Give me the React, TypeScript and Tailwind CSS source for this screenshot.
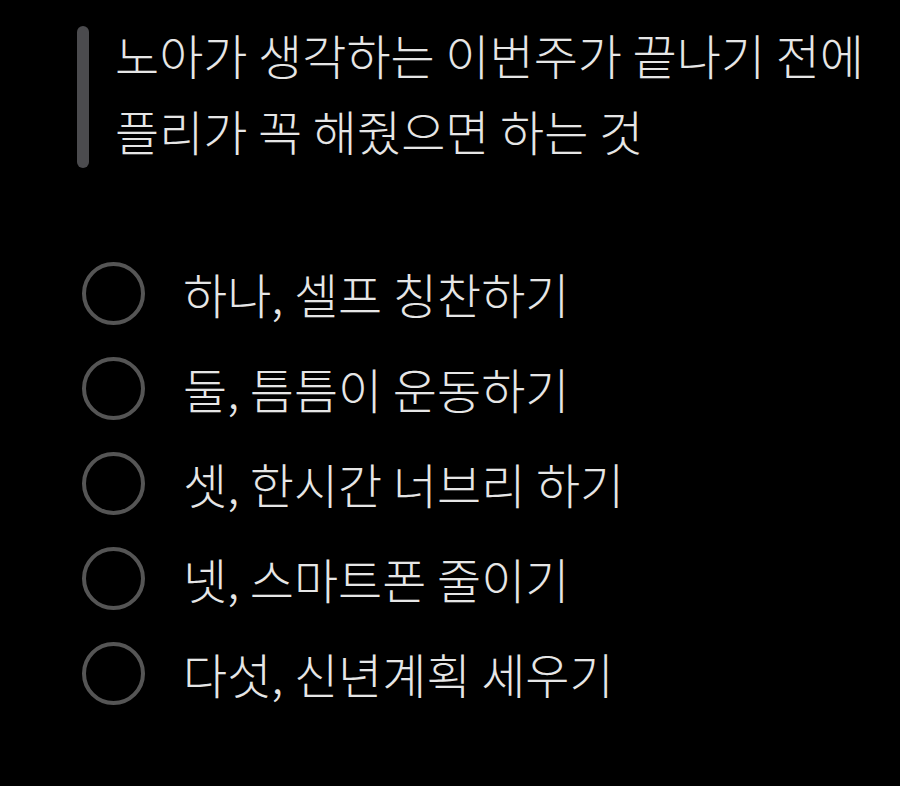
import React from "react";

const items = [
  "하나, 셀프 칭찬하기",
  "둘, 틈틈이 운동하기",
  "셋, 한시간 너브리 하기",
  "넷, 스마트폰 줄이기",
  "다섯, 신년계획 세우기",
];

export default function App() {
  return (
    <div
      className="w-[900px] h-[786px] bg-black pt-[16px] text-[#e6e6e6]"
      style={{ fontFamily: '"Noto Sans CJK KR", "Noto Sans", sans-serif' }}
    >
      <div className="flex items-start ml-[77px]">
        <div className="mt-[10px] w-[12px] h-[142px] rounded-full bg-[#4b4b4e] shrink-0" />
        <div className="ml-[26px] text-[48px] leading-[76px] font-light">
          <div>노아가 생각하는 이번주가 끝나기 전에</div>
          <div>플리가 꼭 해줬으면 하는 것</div>
        </div>
      </div>
      <div className="mt-[78px] ml-[82px] flex flex-col">
        {items.map((t) => (
          <div key={t} className="flex items-center h-[95px]">
            <div className="w-[63px] h-[63px] rounded-full border-[4px] border-[#555555] shrink-0" />
            <div className="ml-[38px] text-[48px] leading-[60px] font-light -mt-[2px]">{t}</div>
          </div>
        ))}
      </div>
    </div>
  );
}
